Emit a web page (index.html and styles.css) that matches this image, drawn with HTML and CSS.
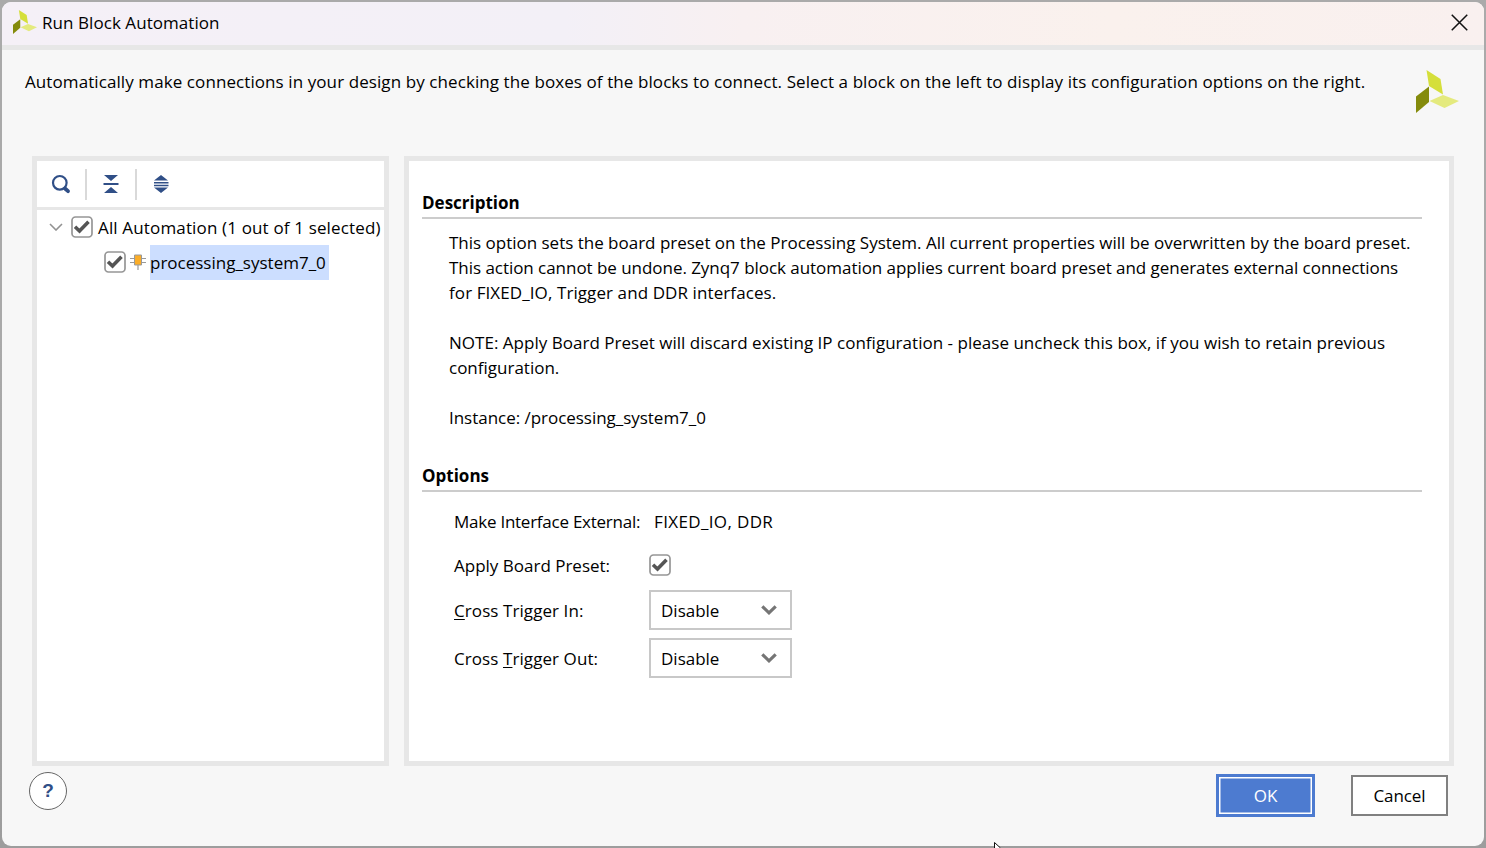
FILE: index.html
```html
<!DOCTYPE html>
<html lang="en">
<head>
<meta charset="utf-8">
<title>Run Block Automation</title>
<link rel="stylesheet" href="styles.css">
</head>
<body>
<svg class="defs" width="0" height="0" aria-hidden="true">
  <symbol id="logo" viewBox="0 0 43 43">
    <path fill="#d5df3b" d="M10.5 0 24.5 9 27 24.5 13 16z"/>
    <path fill="#848b0c" d="M0 26.500 13 16.500V32L0 43z"/>
    <path fill="#e4ea7e" d="M13.500 31 27 25 43 31 28.500 38z"/>
  </symbol>
  <symbol id="check" viewBox="0 0 22 22">
    <rect x="1" y="1" width="20" height="20" rx="3.500" fill="#fff" stroke="#969696" stroke-width="1.700"/>
    <path d="M4 10.800 8.500 15 17.500 5.800" fill="none" stroke="#555" stroke-width="3.600"/>
  </symbol>
  <symbol id="chevron" viewBox="0 0 16 10">
    <path d="M1.300 1.300 8 7.800 14.700 1.300" fill="none" stroke="#757575" stroke-width="3.200"/>
  </symbol>
</svg>
<div class="dialog">
  <header class="titlebar">
    <svg class="title-logo"><use href="#logo"/></svg>
    <span class="title">Run Block Automation</span>
    <svg class="close" viewBox="0 0 16 16"><path d="M.7.7 15.300 15.300M15.300.7.7 15.300" stroke="#111" stroke-width="1.400"/></svg>
  </header>
  <div class="intro">
    <p class="intro-text">Automatically make connections in your design by checking the boxes of the blocks to connect. Select a block on the left to display its configuration options on the right.</p>
    <svg class="intro-logo"><use href="#logo"/></svg>
  </div>
  <main class="panels">
    <section class="tree">
      <div class="toolbar">
        <svg class="tool" viewBox="0 0 20 20"><circle cx="8.800" cy="8.800" r="6.800" fill="none" stroke="#304f87" stroke-width="2.200"/><path d="M14 14.500 17 17.200" stroke="#304f87" stroke-width="3.800" stroke-linecap="round"/></svg>
        <i class="sep"></i>
        <svg class="tool" viewBox="0 0 20 20"><path fill="#304f87" d="M3 1h14l-7 6zM2.500 9h15v2h-15zM3 19h14l-7-6z"/></svg>
        <i class="sep"></i>
        <svg class="tool" viewBox="0 0 20 20"><path fill="#304f87" d="M3 6.500 10 1l7 5.500zM3 13.500 10 19l7-5.500zM3 7.900h14.500v1.500h-14.500zM3 10.700h14.500v1.500h-14.500z"/></svg>
      </div>
      <div class="row root">
        <svg class="expander" viewBox="0 0 14 8"><path d="M1 1 7 7 13 1" fill="none" stroke="#929292" stroke-width="1.600"/></svg>
        <svg class="checkbox"><use href="#check"/></svg>
        <span class="root-label">All Automation (1 out of 1 selected)</span>
      </div>
      <div class="row child">
        <svg class="checkbox"><use href="#check"/></svg>
        <svg class="ip" viewBox="0 0 16 16"><path d="M0 4.500H16M0 8.500H16M8 11V16" stroke="#999" stroke-width="1.200"/><path d="M4.500 1h7v10h-7z" fill="#fbad28" stroke="#999" stroke-width="1"/></svg>
        <span class="selected"><span class="node-label">processing_system7_0</span></span>
      </div>
    </section>
    <section class="details">
      <h2 class="heading h-desc"><span>Description</span></h2>
      <div class="description">
        <div class="l1">This option sets the board preset on the Processing System. All current properties will be overwritten by the board preset.</div>
        <div class="l2">This action cannot be undone. Zynq7 block automation applies current board preset and generates external connections</div>
        <div class="l3">for FIXED_IO, Trigger and DDR interfaces.</div>
        <div class="gap l4">NOTE: Apply Board Preset will discard existing IP configuration - please uncheck this box, if you wish to retain previous</div>
        <div class="l5">configuration.</div>
        <div class="gap l6">Instance: /processing_system7_0</div>
      </div>
      <h2 class="heading h-opt"><span>Options</span></h2>
      <div class="options">
        <span class="o1">Make Interface External:</span><span class="value">FIXED_IO, DDR</span>
        <span class="o2">Apply Board Preset:</span><svg class="checkbox"><use href="#check"/></svg>
        <span class="o3"><u>C</u>ross Trigger In:</span>
        <div class="select"><span>Disable</span><svg class="arrow"><use href="#chevron"/></svg></div>
        <span class="o4">Cross <u>T</u>rigger Out:</span>
        <div class="select"><span>Disable</span><svg class="arrow"><use href="#chevron"/></svg></div>
      </div>
    </section>
  </main>
  <footer class="footer">
    <button class="help">?</button>
    <button class="ok">OK</button>
    <button class="cancel">Cancel</button>
  </footer>
</div>
<svg class="cursor" viewBox="0 0 7 6"><path d="M.5 6V.5L6.500 6" fill="#fff" stroke="#111"/></svg>
</body>
</html>
```
FILE: styles.css
```css
* { box-sizing: border-box; }
body {
  margin: 0;
  width: 1486px;
  height: 848px;
  overflow: hidden;
  padding: 2px;
  background: linear-gradient(#aaa, #aaa 40%, #9d9d9d);
  font: 17px/25px "Open Sans", "Noto Sans", sans-serif;
  color: #000;
}
.defs { position: absolute; }
svg { flex: none; display: block; }
.dialog {
  height: 844px;
  display: flex;
  flex-direction: column;
  background: #f7f7f7;
  border-radius: 9px;
  overflow: hidden;
  white-space: nowrap;
}
.titlebar {
  flex: none;
  display: flex;
  height: 48px;
  padding: 0 16px 0 11px;
  border-bottom: 5px solid #e7e7e7;
  background: linear-gradient(90deg, #f5f0f7, #f3f0f7 38%, #f8f0f1 50%, #faf1ed 75%, #f9f0ef);
}
.title-logo { width: 24px; height: 24px; margin-top: 8px; }
.title { margin: 8px auto 0 5px; letter-spacing: .06px; }
.close { width: 17px; height: 17px; margin-top: 12px; }
.intro { display: flex; flex: none; height: 106px; padding: 20px 25px 0 23px; justify-content: space-between; }
.intro-text { margin: -1px 0 0; letter-spacing: .087px; }
.intro-logo { width: 43px; height: 43px; }
.panels { display: flex; flex: none; height: 610px; gap: 15px; padding: 0 30px; }
.tree, .details { border: 5px solid #e7e7e7; background: #fff; }
.tree { width: 357px; flex: none; }
.details { flex: 1; padding: 29px 27px 0 13px; }
.toolbar { display: flex; align-items: center; height: 49px; padding: 0 0 0 14px; border-bottom: 3px solid #e7e7e7; gap: 14px; }
.tool { width: 20px; height: 20px; }
.sep { width: 2px; height: 31px; background: #d9d9d9; }
.row { display: flex; align-items: center; height: 35px; }
.row .checkbox { margin-bottom: 2px; }
.expander { width: 14px; height: 8px; margin: 0 8px 1px 12px; }
.checkbox { width: 22px; height: 22px; }
.root-label { margin-left: 5px; letter-spacing: .15px; }
.child { padding-left: 67px; }
.ip { width: 16px; height: 16px; margin: 0 0 1px 4px; }
.selected { width: 179px; height: 35px; margin-left: 4px; padding: 5px 0 0; background: #ccdeff; }
.heading { margin: 0; font-size: 17px; line-height: 25px; height: 29px; border-bottom: 2px solid #ccc; }
.description { padding: 11px 0 0 27px; }
.gap { margin-top: 25px; }
.l1 { letter-spacing: -.01px; }
.l2 { letter-spacing: -.042px; }
.l3 { letter-spacing: .09px; }
.l4 { letter-spacing: .02px; }
.l6 { letter-spacing: -.03px; }
.h-opt { margin-top: 33px; }
.options { display: grid; grid-template-columns: 195px 200px; grid-template-rows: 44px 44px 46px 50px; align-items: center; padding: 7px 0 0 32px; }
.o1 { letter-spacing: -.25px; }
.o3, .o4 { letter-spacing: .08px; }
.value { padding-left: 5px; letter-spacing: .36px; }
u { text-decoration-thickness: 1px; text-underline-offset: 2px; }
.select { display: flex; align-items: center; justify-content: space-between; width: 143px; height: 40px; padding: 0 13px 0 10px; border: 2px solid #c8c8c8; }
.arrow { width: 16px; height: 10px; }
.footer { display: flex; padding: 6px 36px 0 27px; }
button { font: inherit; padding: 0; }
.help { width: 38px; height: 38px; border: 1px solid #666; border-radius: 50%; background: #fff; color: #304f87; font: bold 19px "Liberation Sans", sans-serif; }
.ok { width: 99px; height: 43px; margin: 2px 36px 0 auto; border: 3px solid #4d7bd0; background: #4d7bd0; color: #fff; box-shadow: inset 0 0 0 1.500px #fff; }
.cancel { width: 97px; height: 41px; margin-top: 3px; border: 2px solid #808080; background: #fff; letter-spacing: -.1px; }
.cursor { position: absolute; left: 994px; top: 842px; width: 7px; height: 6px; }
```
